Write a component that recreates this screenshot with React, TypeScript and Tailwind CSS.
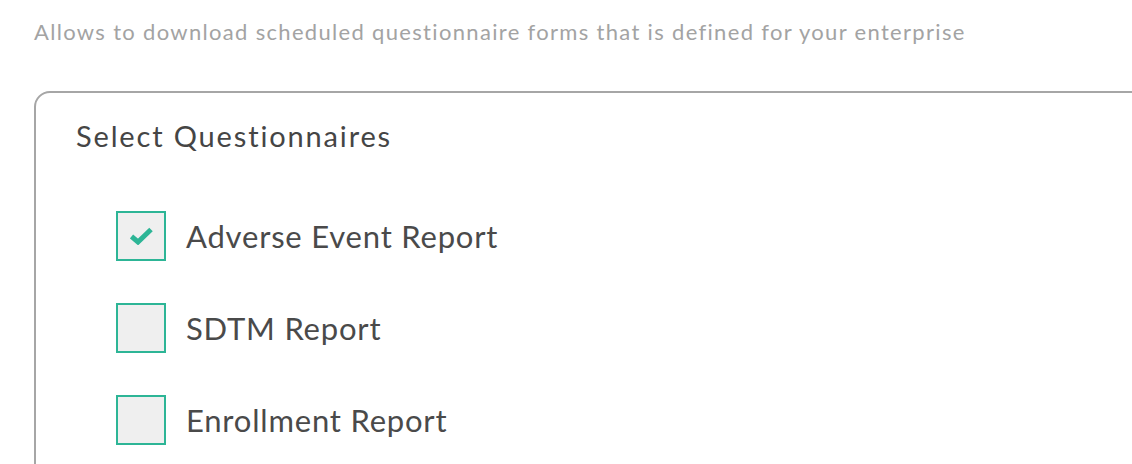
import React, { useState } from 'react';

const items = ['Adverse Event Report', 'SDTM Report', 'Enrollment Report'];

const App: React.FC = () => {
  const [checked, setChecked] = useState<boolean[]>([true, false, false]);

  const toggle = (i: number) => {
    setChecked((prev) => prev.map((v, idx) => (idx === i ? !v : v)));
  };

  return (
    <div
      className="h-[464px] w-[1132px] overflow-hidden bg-white"
      style={{ fontFamily: 'Lato, "Open Sans", sans-serif' }}
    >
      <p className="pl-[34px] pt-[18px] text-[22px] leading-[28px] text-[#a3a3a3] tracking-[1.32px]">
        Allows to download scheduled questionnaire forms that is defined for your enterprise
      </p>

      <div className="ml-[34px] mt-[45px] w-[1140px] h-[420px] rounded-tl-[16px] border-2 border-[#a6a6a6] pl-[40px] pt-[24px]">
        <h2 className="text-[29px] leading-[38px] text-[#454545] tracking-[1.85px]">Select Questionnaires</h2>

        <div className="mt-[56px] flex flex-col gap-[42px] pl-[40px]">
          {items.map((label, i) => (
            <label key={label} className="flex items-center gap-[20px] cursor-pointer">
              <button
                type="button"
                onClick={() => toggle(i)}
                className="flex h-[50px] w-[50px] items-center justify-center border-2 border-[#2db596] bg-[#efefef]"
              >
                {checked[i] && (
                  <svg width="23" height="18" viewBox="0 0 23 18">
                    <path
                      d="M1.5 9.5 L8 15 L21 2.5"
                      fill="none"
                      stroke="#2db596"
                      strokeWidth="5"
                      strokeLinejoin="miter"
                    />
                  </svg>
                )}
              </button>
              <span className="text-[31px] leading-[40px] text-[#4a4a4a] tracking-[0.8px]">{label}</span>
            </label>
          ))}
        </div>
      </div>
    </div>
  );
};

export default App;
